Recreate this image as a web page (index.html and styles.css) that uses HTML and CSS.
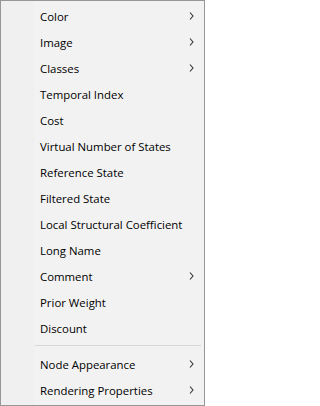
FILE: index.html
```html
<!DOCTYPE html>
<html>
<head>
<meta charset="utf-8">
<link rel="stylesheet" href="styles.css">
</head>
<body>
<div class="menu">
  <div class="item"><span class="label">Color</span><svg class="arrow" width="5" height="8" viewBox="0 0 5 8"><path d="M1 0.5 L4 4 L1 7.5" fill="none" stroke="#333" stroke-width="1.1"/></svg></div>
  <div class="item"><span class="label">Image</span><svg class="arrow" width="5" height="8" viewBox="0 0 5 8"><path d="M1 0.5 L4 4 L1 7.5" fill="none" stroke="#333" stroke-width="1.1"/></svg></div>
  <div class="item"><span class="label">Classes</span><svg class="arrow" width="5" height="8" viewBox="0 0 5 8"><path d="M1 0.5 L4 4 L1 7.5" fill="none" stroke="#333" stroke-width="1.1"/></svg></div>
  <div class="item"><span class="label">Temporal Index</span></div>
  <div class="item"><span class="label">Cost</span></div>
  <div class="item"><span class="label">Virtual Number of States</span></div>
  <div class="item"><span class="label">Reference State</span></div>
  <div class="item"><span class="label">Filtered State</span></div>
  <div class="item"><span class="label">Local Structural Coefficient</span></div>
  <div class="item"><span class="label">Long Name</span></div>
  <div class="item"><span class="label">Comment</span><svg class="arrow" width="5" height="8" viewBox="0 0 5 8"><path d="M1 0.5 L4 4 L1 7.5" fill="none" stroke="#333" stroke-width="1.1"/></svg></div>
  <div class="item"><span class="label">Prior Weight</span></div>
  <div class="item"><span class="label">Discount</span></div>
  <div class="separator"></div>
  <div class="item"><span class="label">Node Appearance</span><svg class="arrow" width="5" height="8" viewBox="0 0 5 8"><path d="M1 0.5 L4 4 L1 7.5" fill="none" stroke="#333" stroke-width="1.1"/></svg></div>
  <div class="item"><span class="label">Rendering Properties</span><svg class="arrow" width="5" height="8" viewBox="0 0 5 8"><path d="M1 0.5 L4 4 L1 7.5" fill="none" stroke="#333" stroke-width="1.1"/></svg></div>
</div>
</body>
</html>
```
FILE: styles.css
```css
html, body {
  margin: 0;
  padding: 0;
  background: #ffffff;
}
.menu {
  box-sizing: border-box;
  width: 205px;
  height: 406px;
  border: 1px solid #979797;
  background: linear-gradient(to right, #f0f0f0 33px, #f2f2f2 33px);
  padding: 2px 0;
  font-family: "Open Sans", "Noto Sans", sans-serif;
  font-size: 11.4px;
  color: #000000;
}
.item {
  height: 26px;
  display: flex;
  align-items: center;
  padding-left: 39px;
  padding-right: 10px;
}
.label {
  white-space: nowrap;
}
.arrow {
  margin-left: auto;
  display: block;
}
.separator {
  height: 10px;
  margin: 0 3px 0 34px;
  display: flex;
  flex-direction: column;
  justify-content: flex-start;
}
.separator::before {
  content: "";
  display: block;
  margin-top: 4px;
  height: 1px;
  background: #d7d7d7;
}
```
